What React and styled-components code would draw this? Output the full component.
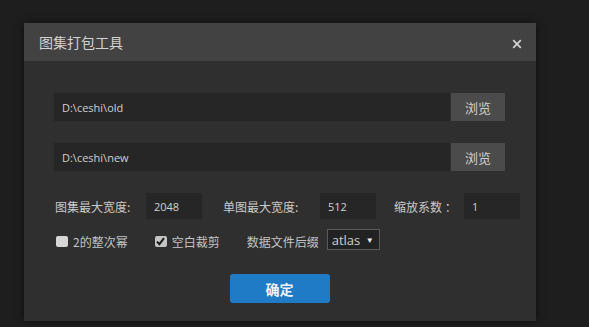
import styled, { createGlobalStyle } from "styled-components";

const GlobalStyle = createGlobalStyle`
  html, body {
    margin: 0;
    padding: 0;
    background: #1e1e1e;
    font-family: "Open Sans", "Noto Sans CJK SC", sans-serif;
  }
  #root {
    width: 589px;
    height: 327px;
    overflow: hidden;
    padding-top: 23px;
    padding-left: 24px;
    box-sizing: border-box;
  }
`;

export default function App() {
  return (
    <>
      <GlobalStyle />
      <Dialog>
        <Header>
          <Title>图集打包工具</Title>
          <Close>
            <svg width="10" height="10" viewBox="0 0 10 10">
              <path d="M1.2 1.2L8.8 8.8M8.8 1.2L1.2 8.8" stroke="#d0d0d0" strokeWidth="1.8" />
            </svg>
          </Close>
        </Header>
        <Body>
          <PathRow>
            <PathInput>D:\ceshi\old</PathInput>
            <Browse>浏览</Browse>
          </PathRow>
          <PathRow $mt={22}>
            <PathInput>D:\ceshi\new</PathInput>
            <Browse>浏览</Browse>
          </PathRow>
          <FieldRow>
            <Label $w={91}>图集最大宽度:</Label>
            <NumInput>2048</NumInput>
            <Label $w={97} $ml={21}>单图最大宽度:</Label>
            <NumInput>512</NumInput>
            <Label $w={70} $ml={18}>缩放系数 ：</Label>
            <NumInput>1</NumInput>
          </FieldRow>
          <OptionRow>
            <Option>
              <Check />
              <span>2的整次幂</span>
            </Option>
            <Option>
              <Check $checked>
                <svg width="9" height="9" viewBox="0 0 9 9">
                  <path d="M1 4.6L3.4 7.2L8 1.2" stroke="#1a1a1a" strokeWidth="2" fill="none" />
                </svg>
              </Check>
              <span>空白裁剪</span>
            </Option>
            <Option>
              <span>数据文件后缀</span>
              <Select>
                atlas
                <Arrow>▼</Arrow>
              </Select>
            </Option>
          </OptionRow>
          <Confirm>确定</Confirm>
        </Body>
      </Dialog>
    </>
  );
}

const Dialog = styled.div`
  width: 512px;
  height: 298px;
  background: #2f2f2f;
  box-shadow: 0 0 8px rgba(0, 0, 0, 0.55);
  display: flex;
  flex-direction: column;
`;

const Header = styled.div`
  height: 38px;
  background: #424242;
  display: flex;
  align-items: center;
  justify-content: space-between;
  padding: 0 14px 0 15px;
`;

const Title = styled.div`
  font-family: "Noto Sans CJK SC", sans-serif;
  font-size: 14px;
  color: #d2d2d2;
`;

const Close = styled.div`
  display: flex;
  margin-top: 4px;
`;

const Body = styled.div`
  padding: 32px 31px 0 30px;
  display: flex;
  flex-direction: column;
`;

const PathRow = styled.div`
  display: flex;
  gap: 1px;
  height: 28px;
  margin-top: ${(p) => p.$mt || 0}px;
`;

const PathInput = styled.div`
  flex: 1;
  background: #262626;
  color: #cfcfcf;
  font-size: 11px;
  padding-left: 8px;
  display: flex;
  align-items: center;
`;

const Browse = styled.div`
  width: 54px;
  background: #4b4b4b;
  color: #d0d0d0;
  font-family: "Noto Sans CJK SC", sans-serif;
  font-size: 13px;
  display: flex;
  align-items: center;
  justify-content: center;
`;

const FieldRow = styled.div`
  display: flex;
  align-items: center;
  height: 26px;
  margin-top: 22px;
  padding-left: 1px;
`;

const Label = styled.div`
  flex-shrink: 0;
  width: ${(p) => p.$w}px;
  margin-left: ${(p) => p.$ml || 0}px;
  font-family: "Noto Sans CJK SC", sans-serif;
  font-size: 12px;
  color: #cacaca;
  white-space: nowrap;
`;

const NumInput = styled.div`
  flex-shrink: 0;
  width: 56px;
  height: 26px;
  background: #262626;
  color: #d0d0d0;
  font-size: 11px;
  padding-left: 8px;
  box-sizing: border-box;
  display: flex;
  align-items: center;
`;

const OptionRow = styled.div`
  display: flex;
  align-items: center;
  gap: 27px;
  height: 21px;
  margin-top: 10px;
  padding-left: 2px;
`;

const Option = styled.div`
  display: flex;
  align-items: center;
  font-family: "Noto Sans CJK SC", sans-serif;
  font-size: 12px;
  color: #c4c4c4;
  span {
    margin-top: 3px;
  }
`;

const Check = styled.div`
  width: 12px;
  height: 11px;
  margin: 3px 5px 0 0;
  border-radius: 2px;
  background: ${(p) => (p.$checked ? "#c4c4c4" : "#d6d6d6")};
  display: flex;
  align-items: center;
  justify-content: center;
`;

const Select = styled.div`
  width: 53px;
  height: 21px;
  margin-left: 8px;
  box-sizing: border-box;
  border: 1px solid #5a5a5a;
  background: #222222;
  color: #cfcfcf;
  font-family: "Open Sans", sans-serif;
  font-size: 13px;
  padding-left: 4px;
  display: flex;
  align-items: center;
  position: relative;
`;

const Arrow = styled.span`
  position: absolute;
  right: 5px;
  top: 1px;
  font-size: 8px;
  color: #eeeeee;
`;

const Confirm = styled.div`
  align-self: center;
  margin-top: 24px;
  width: 100px;
  height: 29px;
  border-radius: 3px;
  background: #1f7bc6;
  color: #f2f2f2;
  font-family: "Noto Sans CJK SC", sans-serif;
  font-size: 14px;
  font-weight: bold;
  display: flex;
  align-items: center;
  justify-content: center;
`;
